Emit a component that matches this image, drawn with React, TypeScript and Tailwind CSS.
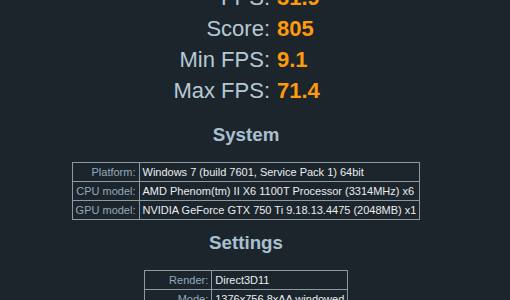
const stats = [
  { label: 'FPS:', value: '31.9' },
  { label: 'Score:', value: '805' },
  { label: 'Min FPS:', value: '9.1' },
  { label: 'Max FPS:', value: '71.4' },
];

const system = [
  { label: 'Platform:', value: 'Windows 7 (build 7601, Service Pack 1) 64bit' },
  { label: 'CPU model:', value: 'AMD Phenom(tm) II X6 1100T Processor (3314MHz) x6' },
  { label: 'GPU model:', value: 'NVIDIA GeForce GTX 750 Ti 9.18.13.4475 (2048MB) x1' },
];

const settings = [
  { label: 'Render:', value: 'Direct3D11' },
  { label: 'Mode:', value: '1376x756 8xAA windowed' },
  { label: 'Preset:', value: 'Custom' },
  { label: 'Quality:', value: 'Ultra' },
  { label: 'Tessellation:', value: 'Extreme' },
];

const InfoTable = ({ rows }: { rows: { label: string; value: string }[] }) => {
  return (
    <table className="mx-auto border-collapse border border-[#8d9aa4] text-[11px] leading-[14px]">
      <tbody>
        {rows.map((row) => (
          <tr key={row.label}>
            <td className="border border-[#8d9aa4] px-[3px] py-[2px] text-right whitespace-nowrap text-[#93a9bb]">
              {row.label}
            </td>
            <td className="border border-[#8d9aa4] px-[3px] py-[2px] text-left whitespace-nowrap text-[#e8edf1]">
              {row.value}
            </td>
          </tr>
        ))}
      </tbody>
    </table>
  );
};

export default function App() {
  return (
    <div className="h-[300px] w-[510px] overflow-hidden bg-[#1d252c] font-['Liberation_Sans',Arial,sans-serif]">
      <div className="w-[492px]">
        <div className="-mt-[18px] grid grid-cols-[270px_1fr] text-[22px] leading-[31px]">
          {stats.map((s) => (
            <div key={s.label} className="contents">
              <div className="text-right text-[#b5c9d7]">{s.label}</div>
              <div className="pl-[7px] font-bold text-[#ff9a0a]">{s.value}</div>
            </div>
          ))}
        </div>

        <h3 className="mt-[18px] text-center text-[18.72px] leading-[22px] font-bold text-[#a9c0d0]">System</h3>
        <div className="mt-[16px]">
          <InfoTable rows={system} />
        </div>

        <h3 className="mt-[12px] text-center text-[18.72px] leading-[22px] font-bold text-[#a9c0d0]">Settings</h3>
        <div className="mt-[16px]">
          <InfoTable rows={settings} />
        </div>
      </div>
    </div>
  );
}
